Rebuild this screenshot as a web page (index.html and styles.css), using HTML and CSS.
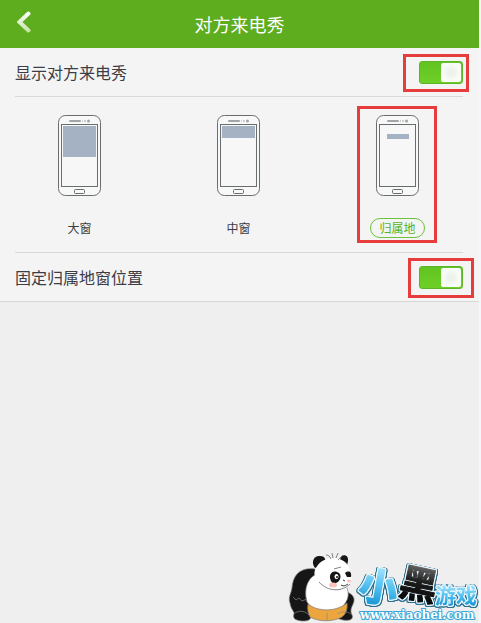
FILE: index.html
```html
<!DOCTYPE html>
<html lang="zh-CN">
<head>
  <meta charset="UTF-8">
  <meta name="viewport" content="width=device-width, initial-scale=1">
  <title>对方来电秀</title>
  <link rel="stylesheet" href="styles.css">
</head>
<body>
  <div class="screen">
    <header class="topbar">
      <button class="back" type="button" aria-label="返回">
        <svg width="14" height="24" viewBox="0 0 14 24">
          <defs>
            <linearGradient id="arrow" gradientUnits="userSpaceOnUse" x1="0" y1="2" x2="0" y2="22">
              <stop offset="0" stop-color="#ffffff"/>
              <stop offset="1" stop-color="#c4e3a8"/>
            </linearGradient>
          </defs>
          <path d="M11.500 3.500 L2.500 12 L11.500 20.500" fill="none" stroke="url(#arrow)" stroke-width="4" stroke-linecap="round"/>
        </svg>
      </button>
      <h1>对方来电秀</h1>
    </header>

    <main>
      <div class="row">
        <label for="show">显示对方来电秀</label>
        <span class="switch-wrap">
          <input class="switch" type="checkbox" id="show" checked>
          <span class="mark mark-switch"></span>
        </span>
      </div>

      <div class="options">
        <label class="option">
          <input type="radio" name="size">
          <svg class="phone" width="43" height="82" viewBox="0 0 43 82">
            <rect class="case" x=".5" y=".5" width="42" height="80" rx="7"/>
            <rect class="glass" x="3.500" y="9.500" width="36" height="62"/>
            <rect class="speaker" x="11" y="5" width="12" height="2" rx="1"/>
            <path class="sensor" d="M24 6h1M26 6h2"/>
            <circle class="speaker" cx="30.500" cy="6" r="1.500"/>
            <rect class="case" x="16.500" y="74.500" width="10" height="4" rx="1"/>
            <rect class="window" x="5" y="11" width="33" height="31"/>
          </svg>
          <span class="name">大窗</span>
        </label>
        <label class="option">
          <input type="radio" name="size">
          <svg class="phone" width="43" height="82" viewBox="0 0 43 82">
            <rect class="case" x=".5" y=".5" width="42" height="80" rx="7"/>
            <rect class="glass" x="3.500" y="9.500" width="36" height="62"/>
            <rect class="speaker" x="11" y="5" width="12" height="2" rx="1"/>
            <path class="sensor" d="M24 6h1M26 6h2"/>
            <circle class="speaker" cx="30.500" cy="6" r="1.500"/>
            <rect class="case" x="16.500" y="74.500" width="10" height="4" rx="1"/>
            <rect class="window" x="5" y="11" width="33" height="12"/>
          </svg>
          <span class="name">中窗</span>
        </label>
        <label class="option">
          <input type="radio" name="size" checked>
          <svg class="phone" width="43" height="82" viewBox="0 0 43 82">
            <rect class="case" x=".5" y=".5" width="42" height="80" rx="7"/>
            <rect class="glass" x="3.500" y="9.500" width="36" height="62"/>
            <rect class="speaker" x="11" y="5" width="12" height="2" rx="1"/>
            <path class="sensor" d="M24 6h1M26 6h2"/>
            <circle class="speaker" cx="30.500" cy="6" r="1.500"/>
            <rect class="case" x="16.500" y="74.500" width="10" height="4" rx="1"/>
            <rect class="window" x="11" y="19" width="22" height="5"/>
          </svg>
          <span class="name">归属地</span>
          <span class="mark mark-option"></span>
        </label>
      </div>

      <div class="row row-last">
        <label for="fixed">固定归属地窗位置</label>
        <span class="switch-wrap">
          <input class="switch" type="checkbox" id="fixed" checked>
          <span class="mark mark-fixed"></span>
        </span>
      </div>
    </main>
  </div>

  <!-- site logo -->
  <svg class="logo" width="193" height="70" viewBox="0 0 193 70">
    <defs>
      <linearGradient id="blue" x1="0" y1="0" x2="0" y2="1">
        <stop offset=".2" stop-color="#a2e2fb"/>
        <stop offset=".5" stop-color="#5cc5f2"/>
        <stop offset=".9" stop-color="#1795d4"/>
      </linearGradient>
      <linearGradient id="dark" x1="0" y1="0" x2="0" y2="1">
        <stop offset=".2" stop-color="#666666"/>
        <stop offset=".5" stop-color="#1c1c1c"/>
        <stop offset="1" stop-color="#000000"/>
      </linearGradient>
    </defs>
    <!-- panda -->
    <g stroke="#777" stroke-width=".7">
      <path d="M27 16 C12 14 5 22 4 35 C3 41 0 44 2 50 C3 57 7 59 6 61 C4 66 9 68 16 68 C23 68 24 64 22 59 L29 45 Z" fill="#161616"/>
      <path d="M52 38 C60 38 67 42 66 48 C65 53 61 56 64 62 C66 67 60 68 55 67 L48 65 Z" fill="#161616"/>
      <path d="M19 49 C14 32 24 20 32 21 L57 31 C61 38 62 44 56 52 L50 60 L27 60 Z" fill="#fff"/>
      <path d="M20 51 C30 59 48 59 59 50 C60 57 57 62 54 64 C45 69 31 69 22 64 C20 60 19 56 20 51 Z" fill="#eda63d"/>
    </g>
    <path d="M5 44 L8 47 L11 45 L14 48 L19 46 M7 60 C12 57 17 58 21 62 M49 61 C54 58 59 58 63 61 M39 60 V67" fill="none" stroke="#888" stroke-width=".7"/>
    <path d="M27 15 C22 8 27 2 32 3 C38 3 38 8 37 11 Z M52 7 C53 0 61 1 60 8 L59 13 Z" fill="#161616"/>
    <path d="M28 15 C32 7 40 5 47 5 C56 6 62 12 62 19 C65 24 63 33 57 36 C49 40 40 37 34 32 C26 27 25 20 28 15 Z" fill="#fff"/>
    <path d="M31 29 C40 39 54 39 62 31 M43 6 C42 3 40 2 38 2 M45 5 L44 0 M48 5 L50 0 M50 7 L55 2 M46 16 L53 14" fill="none" stroke="#666" stroke-width=".8"/>
    <path d="M43 28 C40 22 44 17 49 19 C53 20 54 25 50 29 C47 31 44 31 43 28 Z M57 20 C61 17 64 19 63 24 L59 24 Z" fill="#161616"/>
    <ellipse cx="48.500" cy="23.500" rx="2" ry="2.500" fill="#fff"/>
    <circle cx="49" cy="24" r="1" fill="#111"/>
    <ellipse cx="45" cy="32" rx="4" ry="2.500" fill="#ffc1bb"/>
    <ellipse cx="61" cy="28" rx="2" ry="1.500" fill="#ffc1bb"/>
    <path d="M55 27 L57 28 M53 32 C56 34 58 32 60 31" fill="none" stroke="#333"/>
    <!-- lettering -->
    <g class="word">
      <text class="big blue-text" x="72" y="48" transform="rotate(10 91 32)">小</text>
      <text class="big dark-text" x="112" y="46" transform="rotate(12 133 31)">黑</text>
      <text class="small blue-text" x="147" y="50">游戏</text>
    </g>
    <text class="url" x="72" y="66">www.xiaohei.com</text>
  </svg>
</body>
</html>
```

FILE: styles.css
```css
:root {
  --green: #5dad1e;
  --panel: #f4f4f4;
  --line: #d8d8d8;
  --red: #e63c3c;
}

* {
  box-sizing: border-box;
}

body {
  margin: 0;
  min-height: 100vh;
  position: relative;
  background: #f4f6fb;
  color: #3c3d45;
  font-family: "Noto Sans CJK SC", sans-serif;
}

.screen {
  min-height: 100vh;
  margin-right: 2px;
  background: #efefef;
}

.topbar {
  display: grid;
  grid-template-columns: 48px 1fr 48px;
  align-items: center;
  height: 48px;
  background: var(--green);
  color: #fff;
}

.topbar h1 {
  margin: 0;
  font-size: 18px;
  font-weight: 400;
  line-height: 24px;
  text-align: center;
}

.back {
  display: flex;
  padding: 0 0 4px 17px;
  border: 0;
  background: none;
  cursor: pointer;
}

main {
  background: var(--panel);
  border-bottom: 1px solid var(--line);
}

.row {
  display: flex;
  justify-content: space-between;
  align-items: center;
  height: 49px;
  margin: 0 16px 0 15px;
  border-bottom: 1px solid var(--line);
  font-size: 16px;
  line-height: 24px;
}

.row-last {
  height: 48px;
  border-bottom: 0;
}

.switch-wrap {
  display: flex;
  position: relative;
}

.switch {
  appearance: none;
  display: flex;
  width: 44px;
  height: 23px;
  margin: 0;
  padding: 2px;
  border-radius: 3px;
  background: #bbb;
  cursor: pointer;
}

.switch::before {
  content: "";
  width: 20px;
  border-radius: 2px;
  background: radial-gradient(circle, #edf3eb 20%, #f8fbf7 60%);
}

.switch:checked {
  justify-content: flex-end;
  border: 1px solid #5fb52a;
  padding: 1px;
  background: linear-gradient(#62c322, #6ed026);
}

.options {
  display: grid;
  grid-template-columns: repeat(3, 1fr);
  margin: 0 2px 0 0;
  padding: 18px 0 15px;
  position: relative;
}

/* divider stops short of both edges */
.options::after {
  content: "";
  position: absolute;
  left: 15px;
  right: 14px;
  bottom: 0;
  border-bottom: 1px solid var(--line);
}

.option {
  display: flex;
  flex-direction: column;
  align-items: center;
  gap: 21px;
  position: relative;
  cursor: pointer;
}

.option input {
  position: absolute;
  opacity: 0;
}

.name {
  padding: 0 8px;
  border: 1px solid transparent;
  border-radius: 10px;
  font-size: 12px;
  line-height: 18px;
}

.option input:checked ~ .name {
  border-color: #6cc23a;
  color: #55b51c;
}

.case {
  fill: #f8f8f8;
  stroke: #686d70;
}

.glass {
  fill: #f7f7f7;
  stroke: #686d70;
}

.speaker {
  fill: #a2a5a7;
}

.sensor {
  stroke: #a2a5a7;
}

.window {
  fill: #a5b2c4;
}

/* red call-outs */
.mark {
  position: absolute;
  border: 3px solid var(--red);
  pointer-events: none;
}

.mark-switch {
  inset: -7px -6px -8px -16px;
}

.mark-fixed {
  inset: -8px -11px -9px -11px;
}

.mark-option {
  inset: -9px 40px -5px 39px;
}

.logo {
  position: absolute;
  right: 0;
  bottom: 0;
}

.word text {
  font-family: "Noto Sans CJK SC", sans-serif;
  font-weight: 700;
  stroke-linejoin: round;
}

/* pale rim with a darker edge around it */
.word {
  filter: drop-shadow(1px 0 #e8f6fc) drop-shadow(-1px 0 #e8f6fc) drop-shadow(0 1px #e8f6fc) drop-shadow(0 -1px #e8f6fc) drop-shadow(1px 0 #2d6f8d) drop-shadow(-1px 0 #2d6f8d) drop-shadow(0 1px #2d6f8d);
}

.big {
  font-size: 38px;
  stroke-width: 2px;
}

.small {
  font-size: 21px;
}

.blue-text {
  fill: url(#blue);
}

.dark-text {
  fill: url(#dark);
}

.big.blue-text {
  stroke: url(#blue);
}

.big.dark-text {
  stroke: url(#dark);
  stroke-width: 1px;
}

.url {
  font-family: "DejaVu Serif", serif;
  font-size: 12px;
  font-weight: 700;
  fill: #fff;
  stroke: #3aa5d8;
  stroke-width: 2px;
  paint-order: stroke;
}
```
